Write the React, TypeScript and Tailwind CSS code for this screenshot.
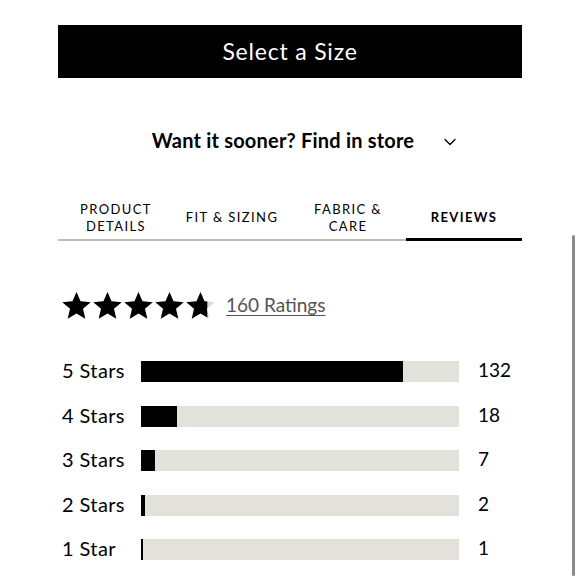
import {ChevronDown} from "lucide-react";

const tabs = [
  {label: ["PRODUCT", "DETAILS"], active: false},
  {label: ["FIT & SIZING"], active: false},
  {label: ["FABRIC &", "CARE"], active: false},
  {label: ["REVIEWS"], active: true},
];

const rows = [
  {label: "5 Stars", count: 132},
  {label: "4 Stars", count: 18},
  {label: "3 Stars", count: 7},
  {label: "2 Stars", count: 2},
  {label: "1 Star", count: 1},
];

const STAR = "M12 1.5l3.09 7.26 7.91.64-6 5.2 1.82 7.7L12 18.2l-6.82 4.1L7 14.6l-6-5.2 7.91-.64z";

function Star({fill}: {fill: number}) {
  const id = `clip-${fill}`;
  return (
    <svg width="31" height="31" viewBox="0 0 24 24">
      <defs>
        <clipPath id={id}>
          <rect x="0" y="0" width={24 * fill} height="24" />
        </clipPath>
      </defs>
      <path d={STAR} fill="#d9d9d9" />
      <path d={STAR} fill="#000" clipPath={`url(#${id})`} />
    </svg>
  );
}

export default function App() {
  const total = 160;
  return (
    <div className="relative h-[580px] w-[580px] overflow-hidden bg-white font-['Lato',sans-serif] text-black">
      <div className="mx-auto w-[464px] pt-[25px]">
        <button className="flex h-[53px] w-full items-center justify-center bg-black text-[23px] tracking-[0.8px] text-white">
          Select a Size
        </button>

        <div className="mt-[47px] flex items-center justify-center gap-[26px] pl-[32px]">
          <span className="text-[20px] font-bold tracking-[0.2px]">Want it sooner? Find in store</span>
          <ChevronDown size={20} strokeWidth={1.6} className="mt-[3px]" />
        </div>

        <div className="mt-[44px] grid grid-cols-4 border-b-2 border-[#bdbcb4]">
          {tabs.map((t) => (
            <div
              key={t.label.join(" ")}
              className={`-mb-[2px] flex h-[42px] flex-col items-center justify-center pb-[2px] text-center text-[13px] leading-[17px] tracking-[1.4px] ${
                t.active ? "border-b-[3px] border-black font-bold" : "border-b-[3px] border-transparent"
              }`}
            >
              {t.label.map((l) => (
                <span key={l}>{l}</span>
              ))}
            </div>
          ))}
        </div>

        <div className="mt-[49px] flex items-center pl-[3px]">
          <div className="flex gap-0">
            <Star fill={1} />
            <Star fill={1} />
            <Star fill={1} />
            <Star fill={1} />
            <Star fill={0.72} />
          </div>
          <a className="ml-[10px] text-[19px] text-[#555] underline underline-offset-[3px]">160 Ratings</a>
        </div>

        <div className="mt-[40px] flex flex-col gap-[23.5px] pl-[4px]">
          {rows.map((r) => (
            <div key={r.label} className="flex h-[21px] items-center">
              <span className="-mt-[3px] w-[79px] text-[20px] tracking-[0.4px]">{r.label}</span>
              <div className="flex h-[21px] w-[318px] bg-[#e2e1da]">
                <div
                  className="h-full bg-black"
                  style={{width: `${Math.max((r.count / total) * 100, 0.6)}%`}}
                />
              </div>
              <span className="-mt-[2px] ml-[19px] text-[19px]">{r.count}</span>
            </div>
          ))}
        </div>
      </div>

      <div className="absolute right-[5px] top-[235px] h-[341px] w-[3px] rounded-full bg-[#8a8a8a]" />
    </div>
  );
}
